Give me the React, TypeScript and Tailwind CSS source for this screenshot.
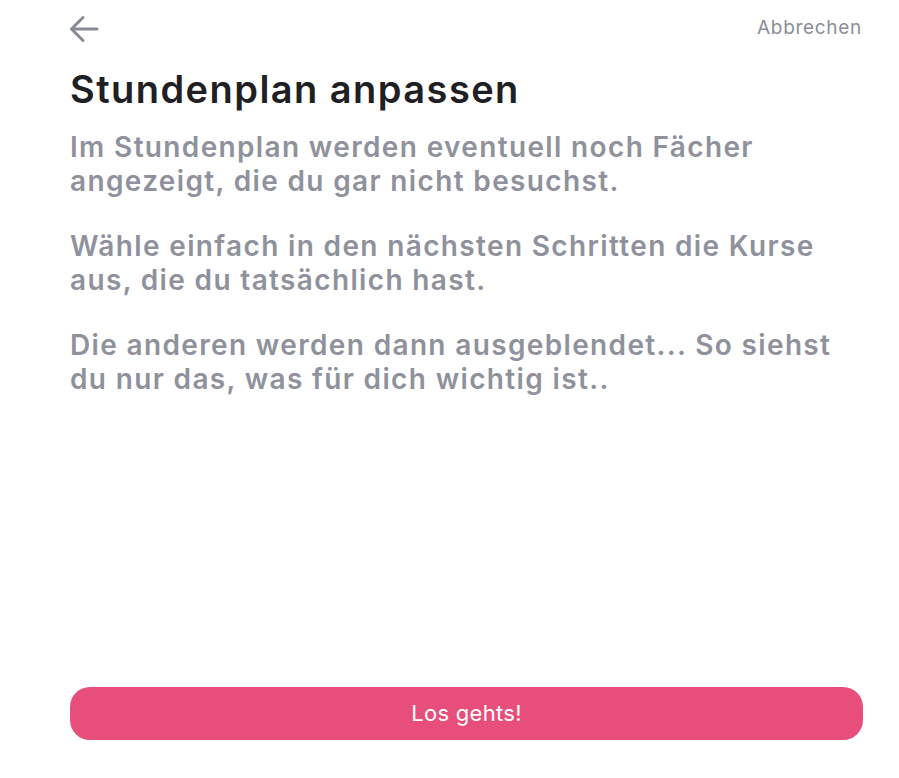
import React from "react";

export default function App() {
  return (
    <div
      className="w-[899px] h-[778px] bg-white flex flex-col px-[70px] pr-[36px]"
      style={{ fontFamily: 'Inter, "Open Sans", "Liberation Sans", sans-serif' }}
    >
      <div className="flex items-center justify-between h-[56px] pt-[1px]">
        <svg width="30" height="30" viewBox="0 0 30 30" fill="none" className="-ml-[1px]">
          <path d="M28 15H3M14 3.5L2.5 15L14 26.5" stroke="#878a94" strokeWidth="3" strokeLinecap="round" strokeLinejoin="round" />
        </svg>
        <span className="text-[19px] text-[#8b8e97] tracking-[0.7px] mr-[1px]">Abbrechen</span>
      </div>
      <h1 className="text-[38px] leading-[46px] font-semibold text-[#1f2024] tracking-[1.45px] mt-[10px]">
        Stundenplan anpassen
      </h1>
      <div className="text-[28px] leading-[34px] font-semibold text-[#8f929c] tracking-[1.35px] mt-[18px] flex flex-col gap-[31px]">
        <p>
          Im Stundenplan werden eventuell noch Fächer
          <br />
          angezeigt, die du gar nicht besuchst.
        </p>
        <p>
          Wähle einfach in den nächsten Schritten die Kurse
          <br />
          aus, die du tatsächlich hast.
        </p>
        <p>
          Die anderen werden dann ausgeblendet... So siehst
          <br />
          du nur das, was für dich wichtig ist..
        </p>
      </div>
      <div className="flex-1" />
      <button className="h-[53px] w-[793px] rounded-[20px] bg-[#e84e7b] text-white text-[22px] tracking-[0.3px] flex items-center justify-center mb-[38px]">
        Los gehts!
      </button>
    </div>
  );
}
